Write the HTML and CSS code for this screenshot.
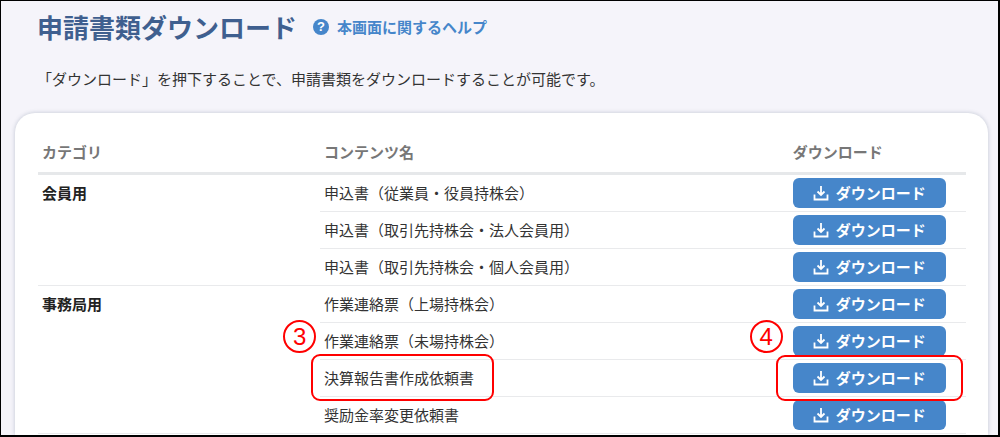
FILE: index.html
```
<!DOCTYPE html>
<html lang="ja">
<head>
    <meta charset="UTF-8">
    <meta name="viewport" content="width=device-width, initial-scale=1">
    <title>申請書類ダウンロード</title>
    <link rel="stylesheet" href="styles.css">
</head>
<body>
    <!-- Shared download icon -->
    <svg class="sprite" aria-hidden="true">
        <symbol id="icon-download" viewBox="0 0 16 16">
            <path d="M8 1v9M4.5 6.5l3.5 3.5 3.5-3.5M1.5 9.5v5h13v-5" fill="none" stroke="currentColor" stroke-width="1.8"/>
        </symbol>
    </svg>

    <main class="screen">
        <header class="page-header">
            <h1>申請書類ダウンロード</h1>
            <a class="help-link" href="#help">
                <span class="help-icon" aria-hidden="true">?</span>
                本画面に関するヘルプ
            </a>
        </header>
        <p class="description">「ダウンロード」を押下することで、申請書類をダウンロードすることが可能です。</p>

        <section class="card">
            <table class="documents">
                <thead>
                    <tr>
                        <th class="col-category" scope="col">カテゴリ</th>
                        <th class="col-name" scope="col">コンテンツ名</th>
                        <th class="col-download" scope="col">ダウンロード</th>
                    </tr>
                </thead>
                <tbody>
                    <tr>
                        <th class="category" scope="rowgroup" rowspan="3">会員用</th>
                        <td>申込書（従業員・役員持株会）</td>
                        <td><button class="download" type="button"><svg class="icon"><use href="#icon-download"/></svg>ダウンロード</button></td>
                    </tr>
                    <tr>
                        <td>申込書（取引先持株会・法人会員用）</td>
                        <td><button class="download" type="button"><svg class="icon"><use href="#icon-download"/></svg>ダウンロード</button></td>
                    </tr>
                    <tr>
                        <td>申込書（取引先持株会・個人会員用）</td>
                        <td><button class="download" type="button"><svg class="icon"><use href="#icon-download"/></svg>ダウンロード</button></td>
                    </tr>
                </tbody>
                <tbody>
                    <tr>
                        <th class="category" scope="rowgroup" rowspan="4">事務局用</th>
                        <td>作業連絡票（上場持株会）</td>
                        <td><button class="download" type="button"><svg class="icon"><use href="#icon-download"/></svg>ダウンロード</button></td>
                    </tr>
                    <tr>
                        <td>作業連絡票（未場持株会）</td>
                        <td><button class="download" type="button"><svg class="icon"><use href="#icon-download"/></svg>ダウンロード</button></td>
                    </tr>
                    <tr>
                        <td>
                            <div class="marked marked-name">
                                決算報告書作成依頼書
                                <span class="step">3</span>
                            </div>
                        </td>
                        <td>
                            <div class="marked marked-download">
                                <button class="download" type="button"><svg class="icon"><use href="#icon-download"/></svg>ダウンロード</button>
                                <span class="step">4</span>
                            </div>
                        </td>
                    </tr>
                    <tr>
                        <td>奨励金率変更依頼書</td>
                        <td><button class="download" type="button"><svg class="icon"><use href="#icon-download"/></svg>ダウンロード</button></td>
                    </tr>
                </tbody>
            </table>
        </section>
    </main>
</body>
</html>
```
FILE: styles.css
```
* {
    box-sizing: border-box;
}

body {
    margin: 0;
    font-family: "Noto Sans CJK JP", sans-serif;
    font-size: 15px;
    line-height: 24px;
    color: #333;
}

.sprite {
    display: none;
}

.screen {
    display: flex;
    flex-direction: column;
    height: 100vh;
    overflow: hidden;
    border: solid #000;
    border-width: 1px 2px 2px 1px;
    background: #f5f4fa;
}

.page-header {
    display: flex;
    align-items: center;
    gap: 16px;
    padding: 8px 36px 0;
}

h1 {
    margin: 0;
    font-size: 26px;
    line-height: 36px;
    color: #3f5f8f;
}

.help-link {
    display: flex;
    align-items: center;
    gap: 8px;
    font-weight: bold;
    color: #4686ca;
    text-decoration: none;
}

.help-icon {
    width: 16px;
    height: 16px;
    border-radius: 50%;
    background: #4686ca;
    color: #fff;
    font-family: "Liberation Sans", sans-serif;
    font-size: 13px;
    line-height: 16px;
    text-align: center;
}

.description {
    margin: 0;
    padding: 22px 36px;
}

.card {
    flex: 1 0 auto;
    margin: 0 10px 0 14px;
    padding: 20px 22px 0 23px;
    border-radius: 20px 20px 0 0;
    background: #fff;
    box-shadow: 0 0 4px rgba(70, 90, 120, 0.3);
}

.documents {
    width: 100%;
    table-layout: fixed;
    border-collapse: separate;
    border-spacing: 0;
}

.col-category {
    width: 30.4%;
}

.col-name {
    width: 50.5%;
}

.documents th,
.documents td {
    height: 37px;
    padding: 3px 4px;
    border-bottom: 1px solid #e9eaec;
    text-align: left;
}

.documents thead th {
    height: 42px;
    padding-bottom: 4px;
    border-bottom: 3px solid #e6e8ea;
    color: #777;
}

.documents .category {
    padding-top: 6px;
    color: #222;
    vertical-align: top;
}

.download {
    display: flex;
    align-items: center;
    justify-content: center;
    gap: 7px;
    width: 153px;
    height: 30px;
    padding: 0;
    border: 0;
    border-radius: 6px;
    background: #4686ca;
    color: #fff;
    font: inherit;
    font-weight: bold;
    cursor: pointer;
}

.icon {
    width: 16px;
    height: 16px;
}

/* Numbered step markers drawn over the table */
.marked {
    position: relative;
    width: fit-content;
}

.marked::after {
    content: "";
    position: absolute;
    border: 2px solid #f00;
    border-radius: 9px;
    pointer-events: none;
    z-index: 1;
}

.marked-name::after {
    inset: -12px -20px -11px -13px;
}

.marked-download::after {
    inset: -8px -17px;
}

.step {
    position: absolute;
    width: 33px;
    height: 33px;
    border: 2px solid #f00;
    border-radius: 50%;
    color: #f00;
    font-family: "Liberation Sans", sans-serif;
    font-size: 24px;
    line-height: 30px;
    text-align: center;
}

.marked-name .step {
    top: -46px;
    left: -41px;
}

.marked-download .step {
    top: -43px;
    left: -43px;
}
```
